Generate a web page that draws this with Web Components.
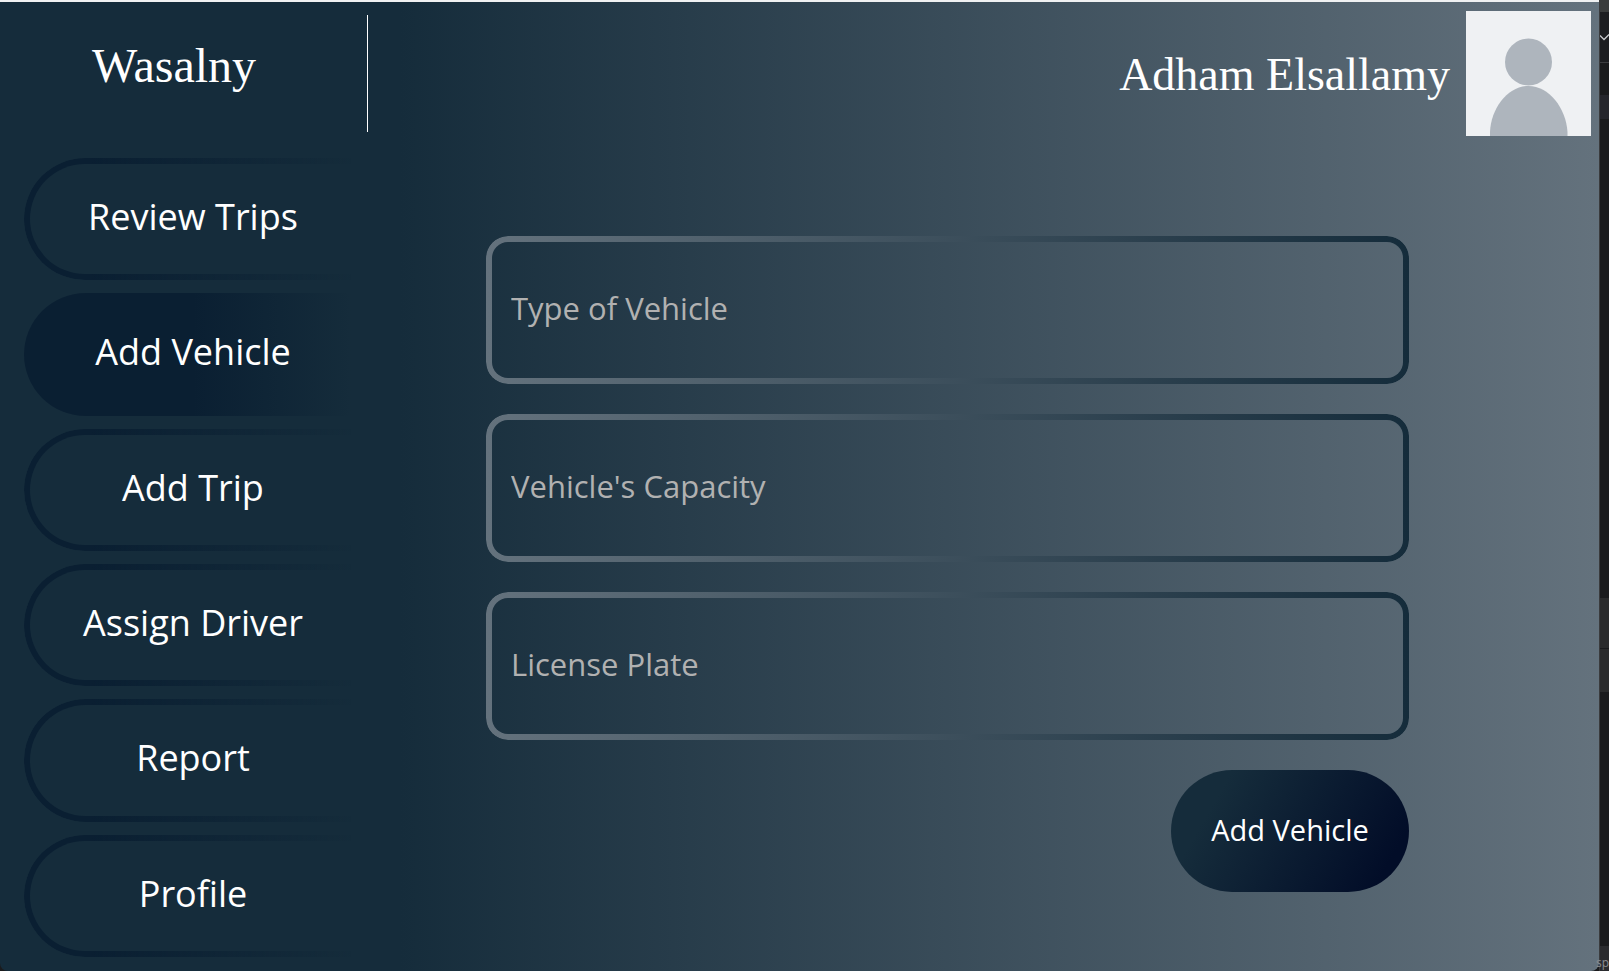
<!DOCTYPE html>
<html lang="en">
<head>
<meta charset="utf-8">
<title>Wasalny</title>
<style>
  html, body { margin: 0; min-height: 100%; background: #1a1b1d; }
  body { display: flex; min-height: 100vh; font-family: "Open Sans", "Noto Sans", sans-serif; }
</style>
</head>
<body>
<app-shell>
  <side-nav slot="side">
    <nav-item>Review Trips</nav-item>
    <nav-item active>Add Vehicle</nav-item>
    <nav-item>Add Trip</nav-item>
    <nav-item>Assign Driver</nav-item>
    <nav-item>Report</nav-item>
    <nav-item>Profile</nav-item>
  </side-nav>
  <user-badge slot="main" name="Adham Elsallamy"></user-badge>
  <vehicle-form slot="main"></vehicle-form>
</app-shell>
<desktop-edge></desktop-edge>
<script>
const define = (name, html, setup) => {
  const template = document.createElement('template');
  template.innerHTML = html;
  customElements.define(name, class extends HTMLElement {
    constructor() {
      super();
      this.attachShadow({ mode: 'open' }).append(template.content.cloneNode(true));
    }
    connectedCallback() { if (setup) setup(this, this.shadowRoot); }
  });
};

define('app-shell', `
  <style>
    :host { flex: 1; display: flex; box-sizing: border-box; border-top: 2px solid #f0f1f2;
      border-radius: 0 0 8px 8px; color: #fff;
      background: linear-gradient(90deg, #152c3b 25%, #64727d 100%); }
    aside { flex: none; width: 368px; display: flex; }
    main { flex: 1; display: flex; flex-direction: column; min-width: 0; }
    ::slotted(side-nav) { flex: 1; }
  </style>
  <aside><slot name="side"></slot></aside>
  <main><slot name="main"></slot></main>`);

define('side-nav', `
  <style>
    :host { display: flex; flex-direction: column; }
    header { box-sizing: border-box; height: 117px; margin-top: 13px; border-right: 1px solid #fff;
      display: flex; align-items: center; padding: 0 0 16px 92px; }
    h1 { margin: 0; font: 400 48px/56px "Liberation Serif", serif; }
    nav { flex: 1; display: flex; flex-direction: column; gap: 13px; padding: 26px 6px 14px 24px; }
  </style>
  <header><h1>Wasalny</h1></header>
  <nav><slot></slot></nav>`);

define('nav-item', `
  <style>
    :host { flex: 1; display: flex; min-height: 80px; }
    button { position: relative; flex: 1; margin: 0; padding: 0 0 4px; border: 0; background: none;
      color: inherit; font: 400 36px/48px "Open Sans", "Noto Sans", sans-serif; cursor: pointer; }
    button::before { content: ""; position: absolute; inset: 0; padding: 6px; border-radius: 62px 0 0 62px;
      background: linear-gradient(90deg, #0a1f32 20%, #0a1f3200 97%);
      mask: linear-gradient(#000 0 0) content-box exclude, linear-gradient(#000 0 0); }
    :host([active]) button::before { mask: none; background: linear-gradient(90deg, #0a1f32 50%, #0a1f3200 97%); }
    span { position: relative; }
  </style>
  <button type="button"><span><slot></slot></span></button>`);

define('user-badge', `
  <style>
    :host { display: flex; justify-content: flex-end; gap: 16px; padding: 9px 8px 0 0; }
    p { margin: 36px 0 0; font: 400 46px/56px "Liberation Serif", serif; }
    svg { display: block; flex: none; }
  </style>
  <p></p>
  <svg width="125" height="125" viewBox="0 0 125 125" role="img" aria-label="Profile picture">
    <rect width="125" height="125" fill="#eff1f3"/>
    <circle cx="62.5" cy="51" r="23.5" fill="#aeb5bd"/>
    <path d="M24 125v-4C25 97 42 75 62.500 75S100 97 101.500 121v4z" fill="#aeb5bd"/>
  </svg>`, (el, root) => { root.querySelector('p').textContent = el.getAttribute('name'); });

define('text-field', `
  <style>
    :host { display: block; position: relative; }
    :host::before { content: ""; position: absolute; inset: 0; padding: 6px; border-radius: 22px; pointer-events: none;
      background: linear-gradient(90deg, #64727d, #152c3b);
      mask: linear-gradient(#000 0 0) content-box exclude, linear-gradient(#000 0 0); }
    input { display: block; box-sizing: border-box; width: 100%; height: 148px; margin: 0; padding: 0 25px 4px; border: 0;
      border-radius: 22px; background: none; outline: none; color: #fff;
      font: 400 31px/44px "Open Sans", "Noto Sans", sans-serif; }
    input::placeholder { color: #b1b1b1; opacity: 1; }
  </style>
  <input type="text">`, (el, root) => {
  const input = root.querySelector('input');
  input.placeholder = el.getAttribute('label');
  input.setAttribute('aria-label', el.getAttribute('label'));
});

define('vehicle-form', `
  <style>
    :host { display: block; padding: 100px 190px 0 118px; }
    form { display: flex; flex-direction: column; gap: 30px; }
    button { align-self: flex-end; width: 238px; height: 122px; padding: 0 0 2px; border: 0; border-radius: 61px; color: #fff;
      background: linear-gradient(120deg, #152c3b 20%, #020d28 88%);
      font: 400 29px/40px "Open Sans", "Noto Sans", sans-serif; cursor: pointer; }
  </style>
  <form>
    <text-field label="Type of Vehicle"></text-field>
    <text-field label="Vehicle's Capacity"></text-field>
    <text-field label="License Plate"></text-field>
    <button type="button">Add Vehicle</button>
  </form>`);

define('desktop-edge', `
  <style>
    :host { flex: none; width: 10px; display: flex; flex-direction: column;
      box-sizing: border-box; border-left: 1px solid #3a3b3d; background: #1a1b1d; }
    .cap { height: 12px; background: #3a3c3c; }
    .bar { height: 50px; border-bottom: 1px solid #3c3d40; background: #1c1d20; }
    svg { display: block; padding-top: 22px; }
    .tab { height: 24px; margin-top: 32px; background: #25262c; }
    .row { height: 50px; margin-top: 479px; background: #2a2b2c; border-bottom: 1px solid #1a1b1d; }
    .row + .row { height: 43px; margin-top: 0; border: 0; }
    .status { display: flex; align-items: flex-end; justify-content: flex-end; height: 25px; margin-top: auto;
      background: #2a2b2e; color: #8b8d90; font: 400 12px/16px "Open Sans", sans-serif; }
  </style>
  <div class="cap"></div>
  <div class="bar"><svg width="9" height="8" viewBox="0 0 9 8" fill="none" stroke="#c8c9cc" stroke-width="1.300"><path d="M0 1.500L4 5.500L9 .5"/></svg></div>
  <div class="tab"></div>
  <div class="row"></div>
  <div class="row"></div>
  <div class="status"><span>sp</span></div>`);
</script>
</body>
</html>
